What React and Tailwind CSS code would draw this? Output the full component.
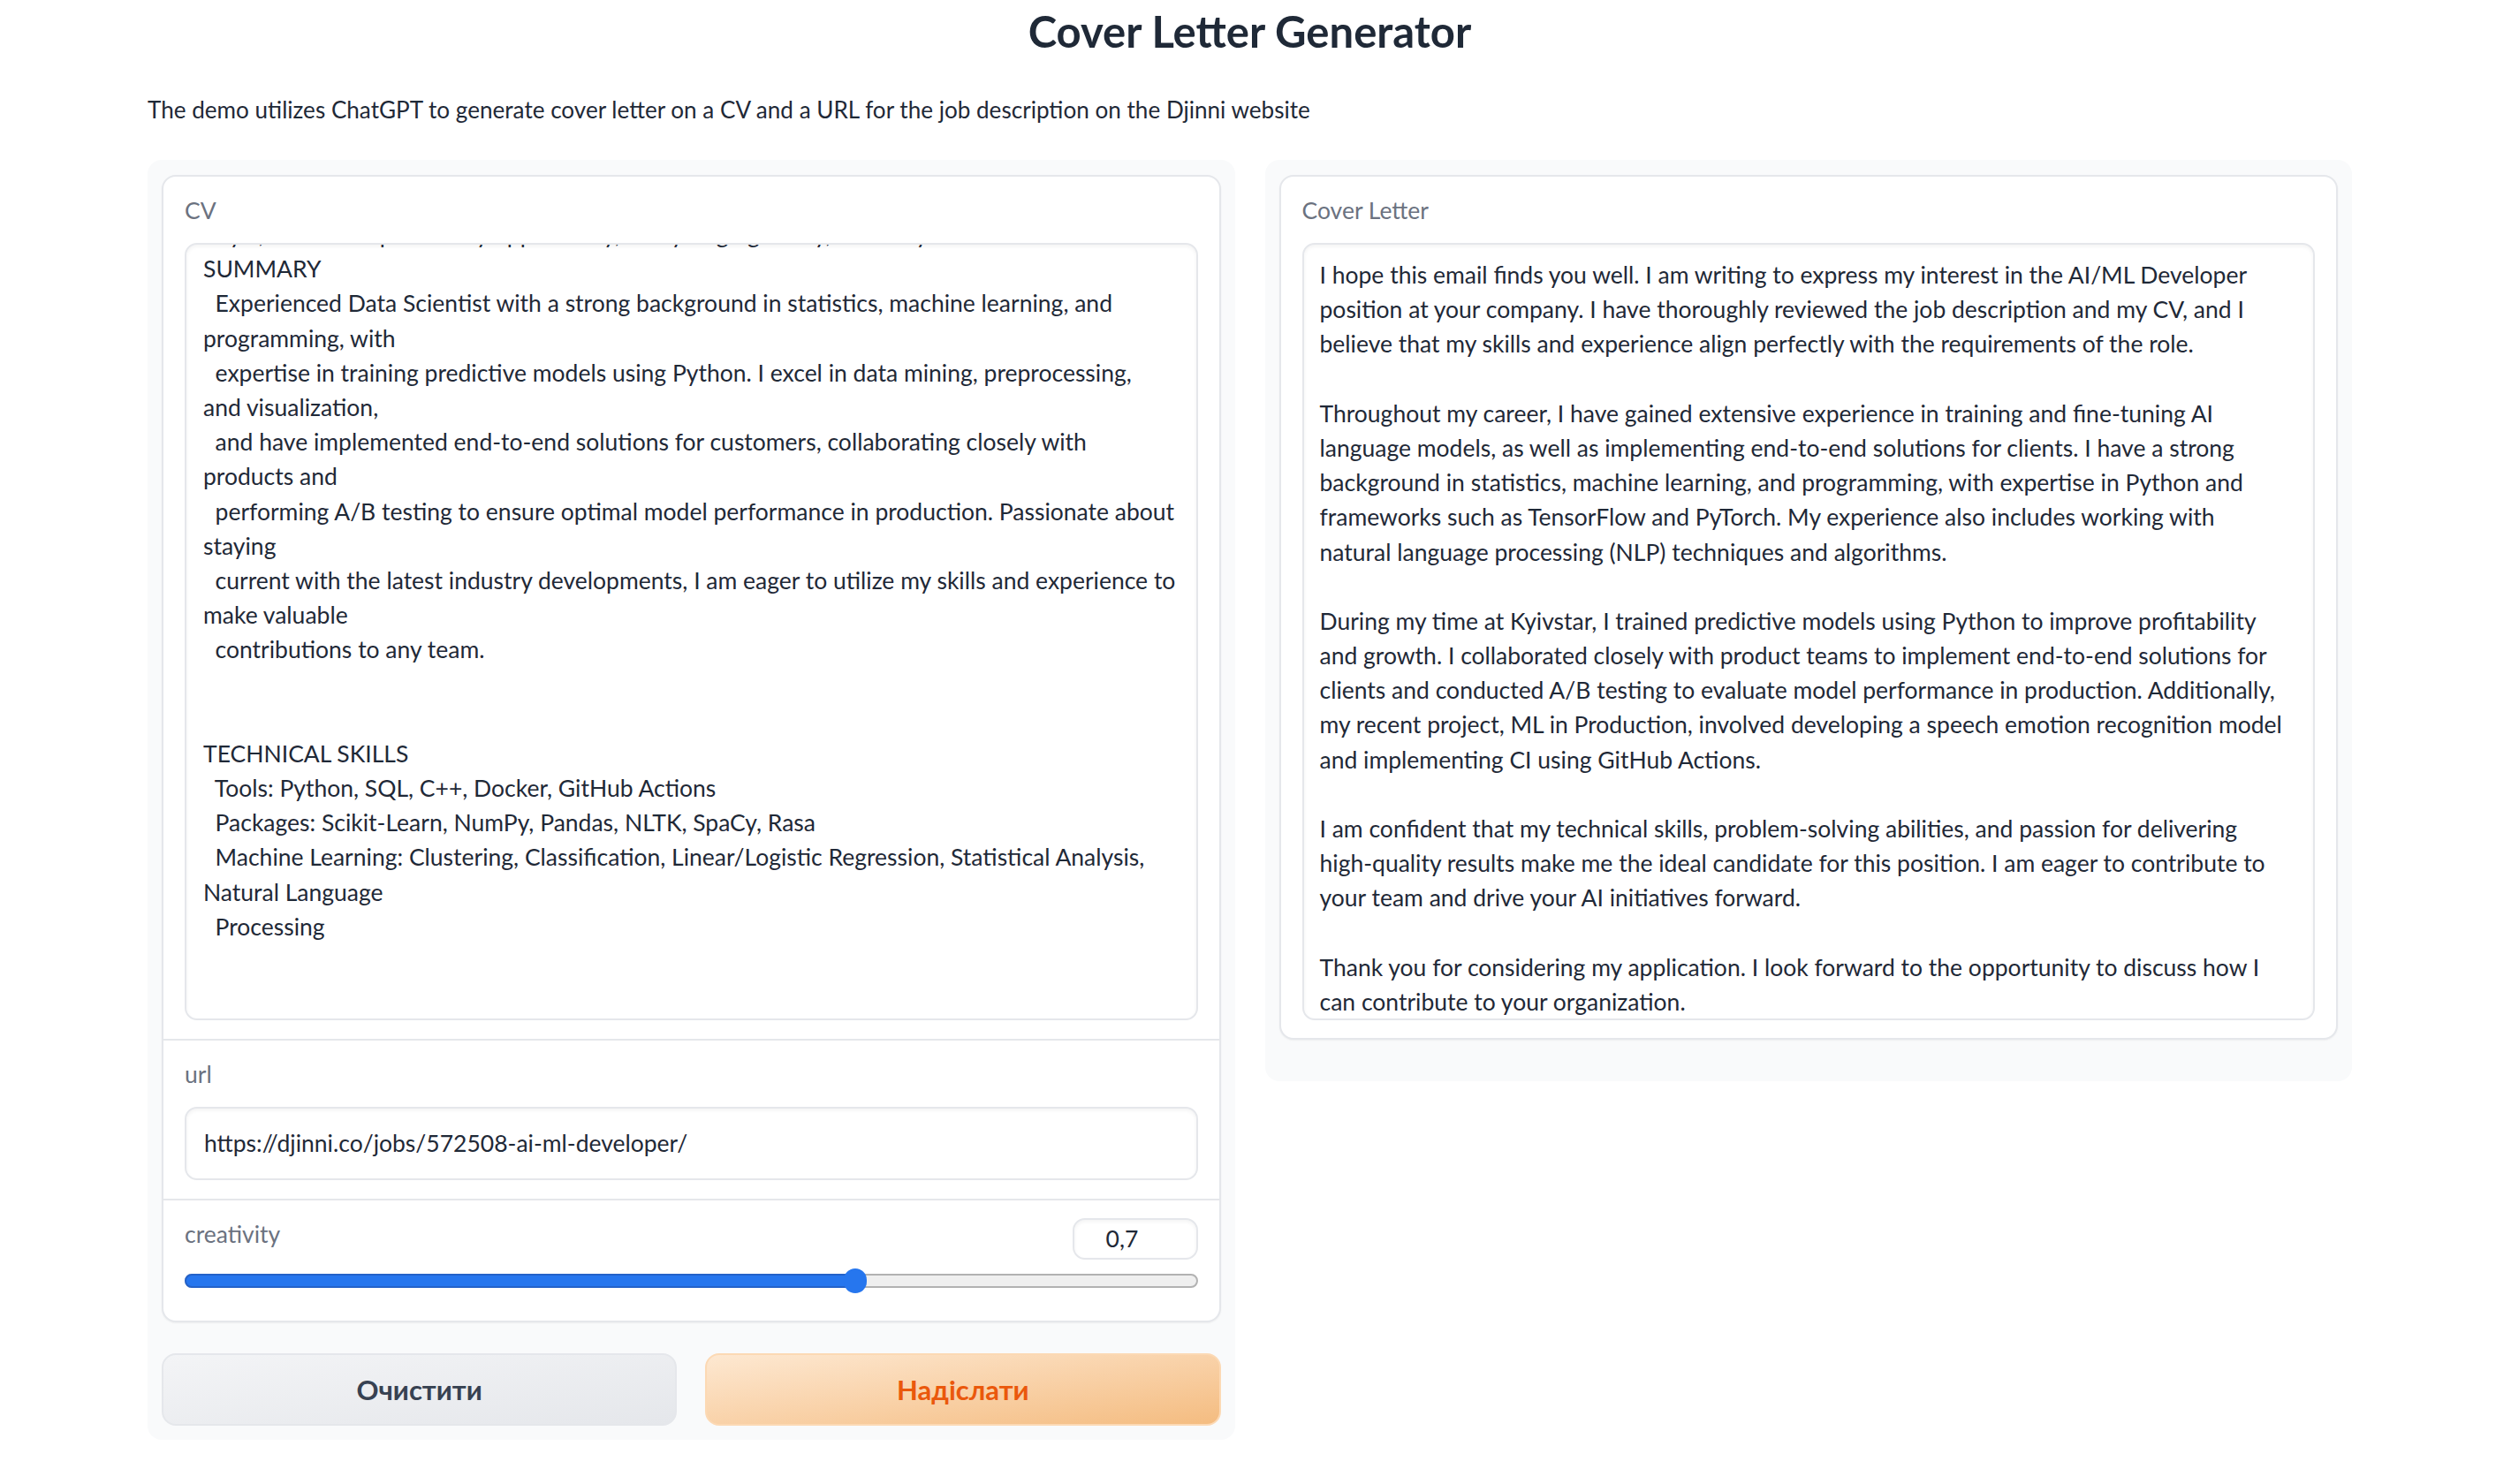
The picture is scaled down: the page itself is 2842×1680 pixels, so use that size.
import React from "react";

const cvLines = [
  "  Kyiv, Ukraine. Open to any opportunity, ready to go globally, remotely",
  "SUMMARY",
  "  Experienced Data Scientist with a strong background in statistics, machine learning, and",
  "programming, with",
  "  expertise in training predictive models using Python. I excel in data mining, preprocessing,",
  "and visualization,",
  "  and have implemented end-to-end solutions for customers, collaborating closely with",
  "products and",
  "  performing A/B testing to ensure optimal model performance in production. Passionate about",
  "staying",
  "  current with the latest industry developments, I am eager to utilize my skills and experience to",
  "make valuable",
  "  contributions to any team.",
  "",
  "",
  "TECHNICAL SKILLS",
  "  Tools: Python, SQL, C++, Docker, GitHub Actions",
  "  Packages: Scikit-Learn, NumPy, Pandas, NLTK, SpaCy, Rasa",
  "  Machine Learning: Clustering, Classification, Linear/Logistic Regression, Statistical Analysis,",
  "Natural Language",
  "  Processing",
];

const letterLines = [
  "I hope this email finds you well. I am writing to express my interest in the AI/ML Developer",
  "position at your company. I have thoroughly reviewed the job description and my CV, and I",
  "believe that my skills and experience align perfectly with the requirements of the role.",
  "",
  "Throughout my career, I have gained extensive experience in training and fine-tuning AI",
  "language models, as well as implementing end-to-end solutions for clients. I have a strong",
  "background in statistics, machine learning, and programming, with expertise in Python and",
  "frameworks such as TensorFlow and PyTorch. My experience also includes working with",
  "natural language processing (NLP) techniques and algorithms.",
  "",
  "During my time at Kyivstar, I trained predictive models using Python to improve profitability",
  "and growth. I collaborated closely with product teams to implement end-to-end solutions for",
  "clients and conducted A/B testing to evaluate model performance in production. Additionally,",
  "my recent project, ML in Production, involved developing a speech emotion recognition model",
  "and implementing CI using GitHub Actions.",
  "",
  "I am confident that my technical skills, problem-solving abilities, and passion for delivering",
  "high-quality results make me the ideal candidate for this position. I am eager to contribute to",
  "your team and drive your AI initiatives forward.",
  "",
  "Thank you for considering my application. I look forward to the opportunity to discuss how I",
  "can contribute to your organization.",
];

function Lines({ lines }) {
  return lines.map((l, i) => (
    <div key={i} className="h-[39.2px] leading-[39.2px] whitespace-pre">
      {l || "\u00a0"}
    </div>
  ));
}

function Label({ children }) {
  return <div className="h-[36px] leading-[36px] text-[26.5px] text-[#6b7280]">{children}</div>;
}

export default function App() {
  return (
    <div className="min-h-screen bg-white font-['Lato','Roboto',sans-serif] text-[#1f2937]">
      <div className="ml-[167px] w-[2495px] pt-[11px]">
        <h1 className="text-center text-[49px] font-bold leading-[49px] text-[#1f2937]">
          Cover Letter Generator
        </h1>
        <p className="mt-[45px] text-[26.1px] leading-[39px]">
          The demo utilizes ChatGPT to generate cover letter on a CV and a URL for the job description on the Djinni website
        </p>

        <div className="mt-[37px] flex items-start gap-[34px]">
          {/* Left column */}
          <div className="min-w-0 flex-1 rounded-[16px] bg-[#f9fafb] px-[16px] pt-[17px] pb-[16px]">
            <div className="rounded-[16px] border-2 border-[#e5e7eb] bg-white shadow-[0_1px_2px_rgba(0,0,0,0.05)]">
              {/* CV */}
              <div className="px-[24px] pt-[20px] pb-[21px]">
                <Label>CV</Label>
                <div className="mt-[19px] h-[880px] overflow-hidden rounded-[14px] border-2 border-[#e5e7eb] bg-white shadow-[inset_0_2px_4px_rgba(0,0,0,0.05)]">
                  <div className="-mt-[31px] pl-[19px] pr-[8px] text-[26.5px] text-[#1f2937]">
                    <Lines lines={cvLines} />
                  </div>
                </div>
              </div>
              {/* URL */}
              <div className="border-t-2 border-[#e5e7eb] px-[24px] pt-[20px] pb-[21px]">
                <Label>url</Label>
                <div className="mt-[19px] flex h-[83px] items-center rounded-[14px] border-2 border-[#e5e7eb] bg-white px-[20px] text-[26.5px] shadow-[inset_0_2px_4px_rgba(0,0,0,0.05)]">
                  https://djinni.co/jobs/572508-ai-ml-developer/
                </div>
              </div>
              {/* Slider */}
              <div className="border-t-2 border-[#e5e7eb] px-[24px] pt-[20px] pb-[30px]">
                <div className="flex items-start justify-between">
                  <Label>creativity</Label>
                  <div className="flex h-[47px] w-[142px] items-center justify-center rounded-[14px] border-2 border-[#e5e7eb] bg-white pr-[29px] text-[26.5px] shadow-[inset_0_2px_4px_rgba(0,0,0,0.05)]">
                    0,7
                  </div>
                </div>
                <div className="relative mt-[9px] h-[30px]">
                  <div className="absolute inset-x-0 top-[7px] h-[16px] rounded-full border-2 border-[#b2b2b2] bg-[#efefef]" />
                  <div className="absolute left-0 top-[7px] h-[16px] w-[66.2%] rounded-l-full border-2 border-[#2462c9] bg-[#2676ee]" />
                  <div className="absolute left-[66.2%] top-[1px] h-[28px] w-[26px] -translate-x-1/2 rounded-full bg-[#2676ee]" />
                </div>
              </div>
            </div>

            <div className="mt-[35px] flex gap-[32px]">
              <button className="flex h-[82px] flex-1 items-center justify-center rounded-[16px] border-2 border-[#e5e7eb] bg-gradient-to-br from-[#f3f4f6] to-[#e5e7eb] text-[31px] font-bold text-[#374151]">
                Очистити
              </button>
              <button className="flex h-[82px] flex-1 items-center justify-center rounded-[16px] border-2 border-[#fcd9b4] bg-gradient-to-br from-[#fde8d1] to-[#f4bc80] text-[31px] font-bold text-[#ea580c]">
                Надіслати
              </button>
            </div>
          </div>

          {/* Right column */}
          <div className="min-w-0 flex-1 rounded-[16px] bg-[#f9fafb] px-[16px] pt-[17px] pb-[47px]">
            <div className="rounded-[16px] border-2 border-[#e5e7eb] bg-white shadow-[0_1px_2px_rgba(0,0,0,0.05)]">
              <div className="px-[24px] pt-[20px] pb-[20px]">
                <Label>Cover Letter</Label>
                <div className="mt-[19px] h-[880px] overflow-hidden rounded-[14px] border-2 border-[#e5e7eb] bg-white shadow-[inset_0_2px_4px_rgba(0,0,0,0.05)]">
                  <div className="pt-[15px] pl-[18px] pr-[8px] text-[26.5px] text-[#1f2937]">
                    <Lines lines={letterLines} />
                  </div>
                </div>
              </div>
            </div>
          </div>
        </div>
      </div>
    </div>
  );
}
